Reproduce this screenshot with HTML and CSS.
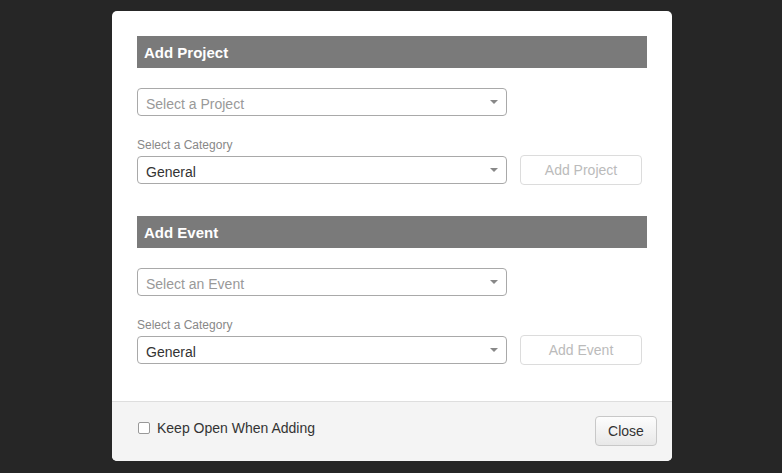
FILE: index.html
```html
<!DOCTYPE html>
<html>
<head>
<meta charset="utf-8">
<link rel="stylesheet" href="styles.css">
</head>
<body>
<div class="modal">
  <div class="modal-body">
    <section class="section">
      <h2 class="section-title">Add Project</h2>
      <div class="select placeholder"><span>Select a Project</span><i class="caret"></i></div>
      <label class="field-label">Select a Category</label>
      <div class="row">
        <div class="select"><span>General</span><i class="caret"></i></div>
        <button class="btn-disabled">Add Project</button>
      </div>
    </section>
    <section class="section">
      <h2 class="section-title">Add Event</h2>
      <div class="select placeholder"><span>Select an Event</span><i class="caret"></i></div>
      <label class="field-label">Select a Category</label>
      <div class="row">
        <div class="select"><span>General</span><i class="caret"></i></div>
        <button class="btn-disabled">Add Event</button>
      </div>
    </section>
  </div>
  <div class="modal-footer">
    <label class="check"><span class="box"></span>Keep Open When Adding</label>
    <button class="btn-close">Close</button>
  </div>
</div>
</body>
</html>
```
FILE: styles.css
```css
html, body {
  margin: 0;
  padding: 0;
}
body {
  background: #262626;
  width: 782px;
  height: 473px;
  font-family: "Liberation Sans", Arial, sans-serif;
  overflow: hidden;
}
.modal {
  margin: 11px 0 0 112px;
  width: 560px;
  height: 450px;
  background: #fff;
  border-radius: 5px;
  display: flex;
  flex-direction: column;
  overflow: hidden;
}
.modal-body {
  padding: 25px 25px 0 25px;
  flex: 1;
  display: flex;
  flex-direction: column;
  gap: 31px;
}
.section {
  display: flex;
  flex-direction: column;
}
.section-title {
  margin: 0 0 20px 0;
  height: 32px;
  background: #7a7a7a;
  color: #fff;
  font-size: 15px;
  font-weight: bold;
  line-height: 33px;
  padding-left: 7px;
}
.select {
  box-sizing: border-box;
  width: 370px;
  height: 28px;
  border: 1px solid #a9a9a9;
  border-radius: 4px;
  display: flex;
  align-items: center;
  justify-content: space-between;
  padding: 3px 8px 0 8px;
  font-size: 14px;
  color: #333;
}
.select.placeholder {
  color: #999;
}
.caret {
  width: 0;
  height: 0;
  border-left: 4px solid transparent;
  border-right: 4px solid transparent;
  border-top: 4px solid #888;
  margin-top: -4px;
}
.field-label {
  margin-top: 22px;
  font-size: 12px;
  color: #888;
  line-height: 14px;
  height: 14px;
  margin-bottom: 3px;
}
.row {
  display: flex;
  align-items: center;
  gap: 13px;
}
.btn-disabled {
  box-sizing: border-box;
  width: 122px;
  height: 30px;
  background: #fff;
  border: 1px solid #dcdcdc;
  border-radius: 4px;
  color: #bbb;
  font-family: "Liberation Sans", Arial, sans-serif;
  font-size: 14px;
  padding: 0;
}
.modal-footer {
  height: 60px;
  box-sizing: border-box;
  background: #f4f4f4;
  border-top: 1px solid #dedede;
  display: flex;
  align-items: center;
  justify-content: space-between;
  padding: 0 15px 0 26px;
}
.check {
  display: flex;
  align-items: center;
  gap: 7px;
  font-size: 14px;
  color: #333;
  margin-top: -8px;
}
.box {
  box-sizing: border-box;
  width: 12px;
  height: 12px;
  border: 1px solid #999;
  border-radius: 2px;
  background: #fff;
}
.btn-close {
  box-sizing: border-box;
  width: 62px;
  height: 30px;
  border: 1px solid #c8c8c8;
  border-radius: 4px;
  background: linear-gradient(#fdfdfd, #e8e8e8);
  color: #333;
  font-family: "Liberation Sans", Arial, sans-serif;
  font-size: 14px;
  padding: 0;
  margin-top: -2px;
}
```
